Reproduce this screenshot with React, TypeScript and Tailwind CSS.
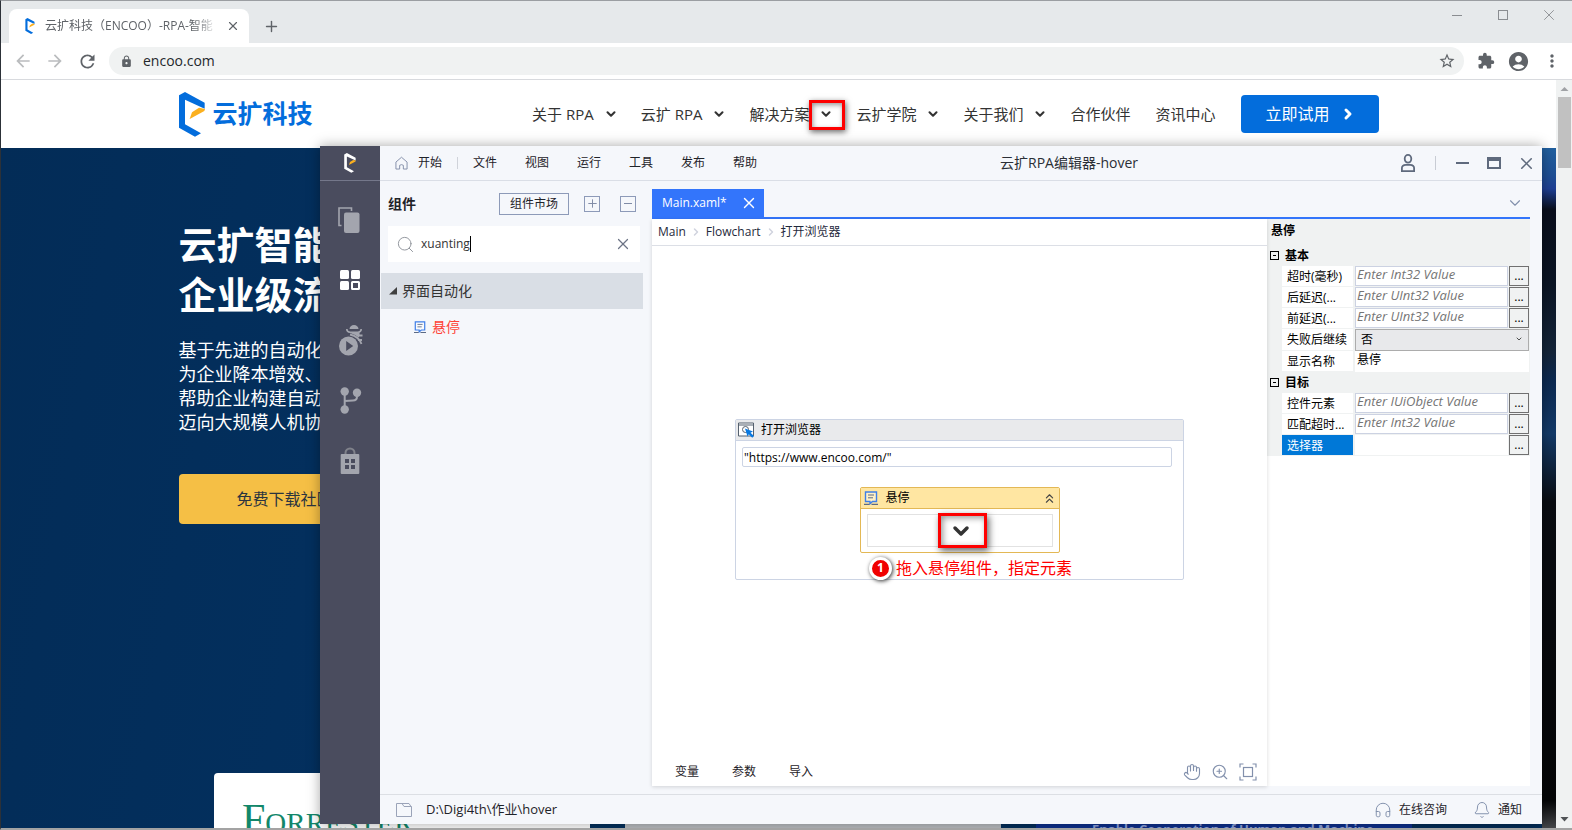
import type { ReactNode } from "react";
import {
  MdAccountCircle,
  MdArrowBack,
  MdArrowForward,
  MdExtension,
  MdLock,
  MdMoreVert,
  MdRefresh,
  MdStarBorder,
} from "react-icons/md";
import { Bell, ChevronDown, ChevronRight, ChevronsUp, Hand, Headphones, Plus, Search, X, ZoomIn } from "lucide-react";

interface NavItem {
  label: string;
  menu?: boolean;
  marked?: boolean;
}

interface Property {
  id: string;
  label: string;
  placeholder?: string;
  kind: "expression" | "select" | "text";
  value?: string;
  selected?: boolean;
}

const siteNav: NavItem[] = [
  { label: "关于 RPA", menu: true },
  { label: "云扩 RPA", menu: true },
  { label: "解决方案", menu: true, marked: true },
  { label: "云扩学院", menu: true },
  { label: "关于我们", menu: true },
  { label: "合作伙伴" },
  { label: "资讯中心" },
];

const editorMenu = ["文件", "视图", "运行", "工具", "发布", "帮助"];

const basicProps: Property[] = [
  { id: "timeout", label: "超时(毫秒)", placeholder: "Enter Int32 Value", kind: "expression" },
  { id: "delay-after", label: "后延迟(...", placeholder: "Enter UInt32 Value", kind: "expression" },
  { id: "delay-before", label: "前延迟(...", placeholder: "Enter UInt32 Value", kind: "expression" },
  { id: "continue", label: "失败后继续", kind: "select", value: "否" },
  { id: "display-name", label: "显示名称", kind: "text", value: "悬停" },
];

const targetProps: Property[] = [
  { id: "element", label: "控件元素", placeholder: "Enter IUiObject Value", kind: "expression" },
  { id: "match-timeout", label: "匹配超时...", placeholder: "Enter Int32 Value", kind: "expression" },
  { id: "selector", label: "选择器", placeholder: "", kind: "expression", selected: true },
];

function EncooMark({ className, color }: { className: string; color: string }) {
  return (
    <svg viewBox="0 0 78 135" className={className} aria-hidden="true">
      <path d="M0 10 18 0 77 32V50L18 23V97L66 124 48 134 0 107Z" fill={color} />
      <path d="M78 51 60 47 39 61 32 81 76 57Z" fill="#fbb01f" />
    </svg>
  );
}

function HoverIcon({ className }: { className: string }) {
  return (
    <svg viewBox="0 0 14 14" className={className} fill="none" aria-hidden="true">
      <path d="M1.5 1h11v9.5H8.500L6 12.800V10.500H1.500Z" fill="#fff" fillOpacity="0.4" stroke="#3f7fe8" strokeWidth="1.4" />
      <path d="M4 4h6M4 6.800h5" stroke="#5b6a86" />
      <path d="M0 13.400h5.500M7.500 13.400h6.500" stroke="#5b6a86" strokeWidth="1.2" />
    </svg>
  );
}

function BrowserTabs() {
  return (
    <div className="flex h-[42px] shrink-0 items-end bg-[#e6e9eb] pl-2">
      <div className="flex h-[34px] w-60 items-center rounded-t-lg bg-white pr-2 pl-4">
        <EncooMark className="h-4 w-[10px] shrink-0" color="#036ddc" />
        <span className="ml-[10px] w-[174px] overflow-hidden text-xs whitespace-nowrap text-[#5f6368] [mask-image:linear-gradient(to_right,black_85%,transparent)]">
          云扩科技（ENCOO）-RPA-智能
        </span>
        <button aria-label="关闭标签页" className="ml-[6px] flex h-4 w-4 items-center justify-center text-[#5f6368]">
          <X size={14} />
        </button>
      </div>
      <button aria-label="新标签页" className="ml-3 flex h-[34px] w-5 items-center justify-center text-[#5f6368]">
        <Plus size={17} />
      </button>
      <div className="ml-auto flex h-7 self-start text-[#8a8d91]">
        <button aria-label="最小化" className="flex w-[46px] items-center justify-center">
          <span className="h-px w-[10px] bg-current" />
        </button>
        <button aria-label="最大化" className="flex w-[46px] items-center justify-center">
          <span className="h-[10px] w-[10px] border border-current" />
        </button>
        <button aria-label="关闭" className="flex w-[46px] items-center justify-center">
          <X size={18} strokeWidth={1.2} />
        </button>
      </div>
    </div>
  );
}

function AddressRow() {
  return (
    <div className="flex h-[37px] shrink-0 items-center border-b border-[#d8dade] bg-white pl-3 text-[#5f6368]">
      <button aria-label="后退" className="flex w-8 text-[#babcbe]">
        <MdArrowBack size={20} />
      </button>
      <button aria-label="前进" className="flex w-8 text-[#babcbe]">
        <MdArrowForward size={20} />
      </button>
      <button aria-label="刷新" className="flex w-8">
        <MdRefresh size={21} />
      </button>
      <div className="flex h-7 flex-1 items-center rounded-full bg-[#f0f2f2] pr-2 pl-[11px]">
        <MdLock size={13} />
        <input
          aria-label="地址"
          defaultValue="encoo.com"
          className="ml-[10px] flex-1 bg-transparent text-sm text-[#24282c] outline-none"
        />
        <button aria-label="收藏">
          <MdStarBorder size={18} />
        </button>
      </div>
      <button aria-label="扩展程序" className="ml-[13px]">
        <MdExtension size={18} />
      </button>
      <button aria-label="用户" className="ml-3">
        <MdAccountCircle size={23} />
      </button>
      <button aria-label="更多" className="mr-[10px] ml-3">
        <MdMoreVert size={20} />
      </button>
    </div>
  );
}

function SiteHeader() {
  return (
    <header className="h-[68px] shrink-0 bg-white">
      <div className="mx-auto flex h-full max-w-[1200px] items-center justify-between">
        <a href="#home" className="flex items-center gap-2 text-[25px] font-bold text-[#036ddc]">
          <EncooMark className="h-[45px] w-[26px]" color="#036ddc" />
          云扩科技
        </a>
        <nav className="flex items-center gap-[25px] text-[15px] text-[#333]">
          {siteNav.map((item) => (
            <a key={item.label} href="#nav" className="flex items-center gap-3 whitespace-nowrap">
              {item.label}
              {item.menu ? (
                <span className="relative flex w-[10px] justify-center">
                  <ChevronDown size={14} strokeWidth={3.5} className="shrink-0" />
                  {item.marked ? (
                    <span className="absolute -top-[7px] -left-3 h-[30px] w-9 border-[3px] border-[#fe0000] shadow-[1px_2px_6px_rgba(0,0,0,0.6),inset_1px_2px_5px_rgba(0,0,0,0.4)]" />
                  ) : null}
                </span>
              ) : null}
            </a>
          ))}
          <a
            href="#trial"
            className="flex h-[38px] w-[138px] items-center justify-center gap-[10px] rounded bg-[#036ddc] pl-[2px] text-base text-white"
          >
            立即试用
            <ChevronRight size={16} strokeWidth={4.5} />
          </a>
        </nav>
      </div>
    </header>
  );
}

function Hero() {
  return (
    <main className="flex min-h-0 flex-1 overflow-hidden bg-[linear-gradient(100deg,#032c57,#03305f_30%,#032c57)]">
      <div className="flex flex-1 flex-col overflow-hidden pl-[14px]">
        <div className="mx-auto w-full max-w-[1200px] pt-[71px] text-white">
          <h1 className="text-[38px] leading-[50px] font-bold">
            云扩智能
            <br />
            企业级流
          </h1>
          <p className="mt-[19px] text-lg leading-6">
            基于先进的自动化
            <br />
            为企业降本增效、
            <br />
            帮助企业构建自动
            <br />
            迈向大规模人机协
          </p>
          <a
            href="#download"
            className="mt-10 flex h-[50px] w-[212px] items-center rounded bg-[#f5bf45] pl-[58px] text-base whitespace-nowrap text-[#2b3440]"
          >
            免费下载社区
          </a>
        </div>
        <div className="mt-[249px] flex shrink-0 gap-[35px] pl-[199px]">
          <div className="h-32 w-[376px] rounded-t bg-white pt-[22px] pl-7">
            <div className="font-['Liberation_Serif',serif] text-[29px] leading-[48px] text-[#12876a]">
              <span className="text-[42px]">F</span>ORRESTER
            </div>
          </div>
          <div className="h-32 w-[376px] rounded-t bg-[#b9bcc0]" />
          <div className="h-32 w-[376px] rounded-t bg-[#0d2f8c] pt-12 pl-14 text-[13px] leading-4 font-bold text-[#8fa3dc]">
            Enable Cooperation of Human and Machine
          </div>
        </div>
      </div>
      <div className="w-[14px] bg-[linear-gradient(to_bottom,#21609f,#1e4f94_4%,#1e3f94_6%,#0a0f1c_9%,#0b1524_20%,#142539_30%,#0c2950_34%,#133a68_42%,#0a0d12_52%,#050607_96%,#45474a)]" />
    </main>
  );
}

function PageScrollbar() {
  return (
    <div className="flex w-4 shrink-0 flex-col items-center bg-[#f0f2f2]">
      <svg viewBox="0 0 16 17" className="h-[17px] w-4" aria-hidden="true">
        <path d="M4.500 11h8L8.500 7Z" fill="#a0a2a5" />
      </svg>
      <div className="h-[71px] w-[13px] bg-[#c1c1c1]" />
      <svg viewBox="0 0 16 17" className="mt-auto h-[17px] w-4" aria-hidden="true">
        <path d="M4.500 6h8L8.500 10.500Z" fill="#505356" />
      </svg>
    </div>
  );
}

function RailButton({ label, children }: { label: string; children: ReactNode }) {
  return (
    <button aria-label={label} className="flex h-[60px] w-full items-center justify-center">
      {children}
    </button>
  );
}

function EditorRail() {
  return (
    <aside className="flex w-[60px] shrink-0 flex-col bg-[#4a4c5e]">
      <div className="flex h-[35px] items-center justify-center border-b border-[#74778a]">
        <EncooMark className="h-5 w-3" color="#fff" />
      </div>
      <nav className="pt-[9px]">
        <RailButton label="项目">
          <svg viewBox="0 0 24 28" width={24} height={28} aria-hidden="true">
            <path d="M3.500 19.500h-2.500V2h12.500v3" fill="none" stroke="#a3a5ae" strokeWidth="1.6" />
            <rect x="6" y="6.500" width="15.500" height="20.500" rx="2" fill="#a3a5ae" />
          </svg>
        </RailButton>
        <RailButton label="组件">
          <svg viewBox="0 0 20 20" width={20} height={20} fill="#fff" aria-hidden="true">
            <rect width="9" height="9" rx="1.500" />
            <rect x="11" width="9" height="9" rx="1.500" />
            <rect y="11" width="9" height="9" rx="1.500" />
            <rect x="12" y="12" width="7" height="7" rx="0.500" fill="none" stroke="#fff" strokeWidth="2" />
          </svg>
        </RailButton>
        <RailButton label="调试">
          <svg viewBox="0 0 26 32" width={26} height={32} aria-hidden="true">
            <path d="M12.500 5a4.500 4 0 0 1 9 0Z" fill="#a3a5ae" />
            <path d="M9.800 5q0 3 3.200 3.200h8q3.200-0.200 3.200-3.200" fill="none" stroke="#a3a5ae" strokeWidth="1.600" />
            <path d="M12 8.500h10.500q0.500 2.500-0.800 5Q18 10.500 12 8.500Z" fill="#a3a5ae" />
            <path d="M21 11.500h4.500M13 10.500q9 2 11.500 9.500M21 16h4" fill="none" stroke="#a3a5ae" strokeWidth="1.800" />
            <circle cx="11.500" cy="22" r="9.500" fill="#a3a5ae" />
            <path d="M9.200 17v10l7-5Z" fill="#4a4c5e" />
          </svg>
        </RailButton>
        <RailButton label="版本">
          <svg viewBox="0 0 24 28" width={24} height={28} aria-hidden="true">
            <path d="M6.700 5.500v18M19 7v3.500q0 4-4 4l-8.300 0.500" fill="none" stroke="#a3a5ae" strokeWidth="2" />
            <circle cx="6.700" cy="5.500" r="4.200" fill="#a3a5ae" />
            <circle cx="19" cy="6.800" r="4.200" fill="#a3a5ae" />
            <circle cx="6.700" cy="23.500" r="4.200" fill="#a3a5ae" />
          </svg>
        </RailButton>
        <RailButton label="市场">
          <svg viewBox="0 0 24 28" width={24} height={28} aria-hidden="true">
            <path d="M7.500 8.500v-1.500a4.500 4.500 0 0 1 9 0v1.500" fill="none" stroke="#80828b" strokeWidth="2" />
            <rect x="2.700" y="8" width="18.600" height="20" rx="1" fill="#a3a5ae" />
            <path d="M7 13h4v4H7zM13 13h4v4h-4zM7 19h4v4H7zM13 19h4v4h-4z" fill="#4a4c5e" />
          </svg>
        </RailButton>
      </nav>
    </aside>
  );
}

function EditorTitleBar() {
  return (
    <div className="flex h-[35px] shrink-0 items-center border-b border-[#dadee6] text-xs text-[#1f2329]">
      <button className="flex items-center gap-[10px] pl-[15px]">
        <svg viewBox="0 0 14 14" width={13} height={14} fill="none" stroke="#7f8ba6" aria-hidden="true">
          <path d="M1 6 7 0.800 13 6v7.500H9V9.500q-2-1.500-4 0v4H1Z" />
        </svg>
        开始
      </button>
      <span className="mx-[15px] h-3 w-px bg-[#d0d3da]" />
      <nav className="flex gap-7">
        {editorMenu.map((item) => (
          <button key={item}>{item}</button>
        ))}
      </nav>
      <div className="flex-1 text-center text-sm text-[#2b2f36]">云扩RPA编辑器-hover</div>
      <div className="flex h-full items-center text-[#5f6a7d]">
        <button aria-label="账户" className="flex w-[54px] justify-center">
          <svg viewBox="0 0 14 18" width={14} height={18} fill="none" stroke="currentColor" strokeWidth="1.800" aria-hidden="true">
            <ellipse cx="7" cy="4.800" rx="3.300" ry="3.900" />
            <path d="M0.900 17.100v-3q0-3 4-3.200h4.200q4 0.200 4 3.200v3Z" />
          </svg>
        </button>
        <span className="mr-[10px] h-[14px] w-px bg-[#c8ccd4]" />
        <button aria-label="最小化窗口" className="flex w-8 justify-center">
          <span className="h-[2px] w-[13px] bg-current" />
        </button>
        <button aria-label="最大化窗口" className="flex w-8 justify-center">
          <span className="h-3 w-[14px] border-2 border-t-4 border-current" />
        </button>
        <button aria-label="关闭窗口" className="flex w-8 justify-center">
          <X size={19} strokeWidth={2} />
        </button>
      </div>
    </div>
  );
}

function ComponentPanel() {
  return (
    <section className="w-[272px] shrink-0">
      <div className="flex h-[45px] items-center pl-2 text-[#1f2329]">
        <h2 className="flex-1 text-sm font-bold">组件</h2>
        <button className="h-[22px] w-[70px] border border-[#8d9ab8] text-xs">组件市场</button>
        <button aria-label="展开" className="ml-[15px] flex h-4 w-4 items-center justify-center border border-[#8d9ab8] text-[#7f8ba6]">
          <Plus size={13} strokeWidth={1.8} className="shrink-0" />
        </button>
        <button aria-label="折叠" className="mr-4 ml-5 flex h-4 w-4 items-center justify-center border border-[#8d9ab8]">
          <span className="h-px w-2 bg-[#7f8ba6]" />
        </button>
      </div>
      <div className="mr-3 ml-2 flex h-9 items-center bg-white px-2">
        <Search size={19} strokeWidth={1.2} className="text-[#8f939b]" />
        <input
          aria-label="搜索组件"
          defaultValue="xuanting"
          className="field-sizing-content ml-[6px] text-xs text-[#333] outline-none"
        />
        <span className="h-4 w-px bg-black" />
        <button aria-label="清除" className="ml-auto text-[#6d7486]">
          <X size={18} strokeWidth={1.6} />
        </button>
      </div>
      <button className="mt-[11px] ml-px flex h-9 w-[262px] items-center gap-[5px] bg-[#d9dee5] pl-2 text-sm text-[#333]">
        <svg viewBox="0 0 8 8" width={8} height={8} aria-hidden="true">
          <path d="M8 0v7.500H0Z" fill="#404040" />
        </svg>
        界面自动化
      </button>
      <button className="flex h-9 items-center gap-[6px] pl-[34px] text-sm text-[#ff4136]">
        <HoverIcon className="h-3 w-3" />
        悬停
      </button>
    </section>
  );
}

function BrowserActivity() {
  return (
    <div className="mt-[173px] h-[161px] w-[449px] rounded-xs border border-[#ccd4e4] text-xs text-black">
      <div className="flex h-[21px] items-center gap-[6px] border-b border-[#ccd4e4] bg-[#e9eaec] pl-[2px] leading-4">
        <svg viewBox="0 0 17 16" width={17} height={16} fill="none" aria-hidden="true">
          <path d="M0.500 1h15v13H0.500Z" fill="#fff" stroke="#55606e" />
          <path d="M0.500 3h15" stroke="#55606e" />
          <circle cx="7.500" cy="7.500" r="3" stroke="#55606e" />
          <path d="m7 6.500 8 3-2.500 1.200 3.500 3.300-1.800 1.800-3.400-3.600L9.500 14.500Z" fill="#0878e0" />
        </svg>
        打开浏览器
      </div>
      <input
        aria-label="网址"
        defaultValue={'"https://www.encoo.com/"'}
        className="mt-[6px] ml-[6px] block h-5 w-[430px] rounded-xs border border-[#ccd4e4] bg-white px-px text-xs outline-none"
      />
      <div className="mx-auto mt-5 w-[200px] rounded-xs border border-[#e3b855] bg-white">
        <div className="flex h-[21px] items-center border-b border-[#e3b855] bg-[#ffe6a2] pr-[2px] pl-[3px]">
          <HoverIcon className="mr-2 h-[14px] w-[14px]" />
          悬停
          <button aria-label="收起" className="ml-auto">
            <ChevronsUp size={15} strokeWidth={1.8} className="text-[#444]" />
          </button>
        </div>
        <div className="mx-[6px] my-[5px] flex h-[33px] items-center justify-center border border-[#e2e2e2] pl-[6px]">
          <div className="relative z-10 flex h-[35px] w-[49px] shrink-0 items-center justify-center border-[3px] border-[#fe0000] pr-1 shadow-[2px_3px_7px_rgba(0,0,0,0.6),inset_2px_2px_6px_rgba(0,0,0,0.4)]">
            <ChevronDown size={24} strokeWidth={3.5} className="text-[#333]" />
          </div>
        </div>
      </div>
      <div className="ml-[133px] flex items-center gap-1 pt-[3px] text-base text-[#fe0000]">
        <span className="flex h-[23px] w-[23px] items-center justify-center rounded-full border-[3px] border-white bg-[#f00000] text-xs font-bold text-white shadow-[1px_1px_4px_rgba(0,0,0,0.8)]">
          1
        </span>
        <span className="leading-6 whitespace-nowrap">拖入悬停组件，指定元素</span>
      </div>
    </div>
  );
}

function DesignCanvas() {
  return (
    <section className="z-10 flex min-w-0 flex-1 flex-col bg-white shadow-[0_1px_4px_rgba(0,0,0,0.15)]">
      <div className="flex h-[27px] shrink-0 items-center gap-1 border-b border-[#dcdfe6] pl-[6px] text-xs text-[#1f2a3c]">
        <span>Main</span>
        <ChevronRight size={12} strokeWidth={3} className="text-[#d0d3de]" />
        <span>Flowchart</span>
        <ChevronRight size={12} strokeWidth={3} className="text-[#d0d3de]" />
        <span>打开浏览器</span>
      </div>
      <div className="flex flex-1 items-start justify-center">
        <BrowserActivity />
      </div>
      <div className="flex h-7 shrink-0 items-center gap-[33px] pr-[10px] pl-[23px] text-xs text-[#1f2329]">
        <button>变量</button>
        <button>参数</button>
        <button>导入</button>
        <div className="ml-auto flex gap-[10px] text-[#8290ac]">
          <button aria-label="平移">
            <Hand size={18} strokeWidth={1.5} />
          </button>
          <button aria-label="放大">
            <ZoomIn size={18} strokeWidth={1.5} />
          </button>
          <button aria-label="适应屏幕">
            <svg viewBox="0 0 18 18" width={18} height={18} fill="none" stroke="currentColor" strokeWidth="1.200" aria-hidden="true">
              <path d="M1 4.500V1h3.500M13.500 1H17v3.500M17 13.500V17h-3.500M4.500 17H1v-3.500" />
              <rect x="4.500" y="4.500" width="9" height="9" />
            </svg>
          </button>
        </div>
      </div>
    </section>
  );
}

function PropertyRow({ prop }: { prop: Property }) {
  return (
    <div className={`flex gap-[2px] pl-[14px] ${prop.kind === "select" ? "h-[22px]" : "h-[21px]"}`}>
      <label
        htmlFor={prop.id}
        className={`mb-px w-[71px] shrink-0 pl-[5px] leading-[22px] whitespace-nowrap ${
          prop.selected ? "bg-[#0078d7] text-white" : "bg-white"
        }`}
      >
        {prop.label}
      </label>
      {prop.kind === "select" ? (
        <div className="relative flex-1">
          <select id={prop.id} className="h-full w-full appearance-none border border-[#acacac] bg-[#e8e9eb] px-[5px] leading-[18px]">
            <option>{prop.value}</option>
          </select>
          <ChevronDown size={8} className="pointer-events-none absolute top-[6px] right-[6px]" />
        </div>
      ) : null}
      {prop.kind === "text" ? (
        <input id={prop.id} defaultValue={prop.value} className="min-w-0 flex-1 bg-white pb-1 pl-[2px] outline-none" />
      ) : null}
      {prop.kind === "expression" ? (
        <>
          <input
            id={prop.id}
            placeholder={prop.placeholder}
            className={`mb-px min-w-0 flex-1 border bg-white pb-[2px] pl-px text-[13px] italic outline-none placeholder:text-[#757575] ${
              prop.selected ? "border-white" : "border-[#ccd2e2]"
            }`}
          />
          <button aria-label={`编辑${prop.label}`} className="-ml-px mb-px w-5 border border-[#707070] bg-[#f0f2f2] leading-[18px]">
            ...
          </button>
        </>
      ) : null}
    </div>
  );
}

function PropertyGroup({ title, items }: { title: string; items: Property[] }) {
  return (
    <div>
      <div className="flex h-[21px] items-center gap-[6px] pl-[2px] font-bold">
        <button aria-label={`折叠${title}`} className="flex h-[9px] w-[9px] items-center justify-center border border-black">
          <span className="h-px w-[3px] bg-black" />
        </button>
        {title}
      </div>
      {items.map((prop) => (
        <PropertyRow key={prop.id} prop={prop} />
      ))}
    </div>
  );
}

function PropertyPanel() {
  return (
    <section className="w-[263px] shrink-0 bg-white text-xs text-black">
      <div className="bg-[#f0f2f2] pr-px pl-px">
        <h2 className="h-[26px] pl-[3px] leading-[23px] font-bold">悬停</h2>
        <PropertyGroup title="基本" items={basicProps} />
        <PropertyGroup title="目标" items={targetProps} />
      </div>
    </section>
  );
}

function EditorStatusBar() {
  return (
    <footer className="flex h-[30px] shrink-0 items-center border-t border-[#dcdfe4] pr-5 pl-4 text-xs text-[#1f2329]">
      <svg viewBox="0 0 16 14" width={16} height={14} fill="none" stroke="#9aa3b8" aria-hidden="true">
        <path d="M0.500 0.500H6l2 3h7.500v10H0.500ZM6 0.500h7l2 3" />
      </svg>
      <span className="ml-[14px] text-[13px]">D:\Digi4th\作业\hover</span>
      <button className="ml-auto flex items-center gap-[7px]">
        <Headphones size={18} strokeWidth={1.3} className="text-[#8290ac]" />
        在线咨询
      </button>
      <button className="ml-[26px] flex items-center gap-[7px]">
        <Bell size={18} strokeWidth={1.3} className="text-[#8290ac]" />
        通知
      </button>
    </footer>
  );
}

function EditorWindow() {
  return (
    <div className="absolute top-[145px] right-[30px] bottom-1 left-[319px] flex bg-[#f5f7fb] shadow-[0_0_12px_rgba(0,0,0,0.35)]">
      <EditorRail />
      <div className="flex min-w-0 flex-1 flex-col">
        <EditorTitleBar />
        <div className="flex min-h-0 flex-1 pb-2">
          <ComponentPanel />
          <div className="mr-3 flex min-w-0 flex-1 flex-col pt-2">
            <div className="flex shrink-0 items-center justify-between border-b-2 border-[#3375fb]">
              <div className="flex h-7 w-28 items-center justify-between bg-[#3375fb] pr-[6px] pl-[10px] text-xs font-medium text-white">
                Main.xaml*
                <button aria-label="关闭 Main.xaml">
                  <X size={18} strokeWidth={1.8} />
                </button>
              </div>
              <button aria-label="文档列表" className="mr-[6px] text-[#8290ac]">
                <ChevronDown size={18} strokeWidth={1.5} />
              </button>
            </div>
            <div className="flex min-h-0 flex-1">
              <DesignCanvas />
              <PropertyPanel />
            </div>
          </div>
        </div>
        <EditorStatusBar />
      </div>
    </div>
  );
}

export default function App() {
  return (
    <div className="relative flex h-screen flex-col overflow-hidden border-t border-b-2 border-l border-t-[#9b9ea2] border-b-[#a3a3a3] border-l-[#2c3138] bg-white font-['Open_Sans','Noto_Sans_CJK_SC',sans-serif]">
      <BrowserTabs />
      <AddressRow />
      <div className="flex min-h-0 flex-1">
        <div className="flex min-w-0 flex-1 flex-col">
          <SiteHeader />
          <Hero />
        </div>
        <PageScrollbar />
      </div>
      <EditorWindow />
    </div>
  );
}
